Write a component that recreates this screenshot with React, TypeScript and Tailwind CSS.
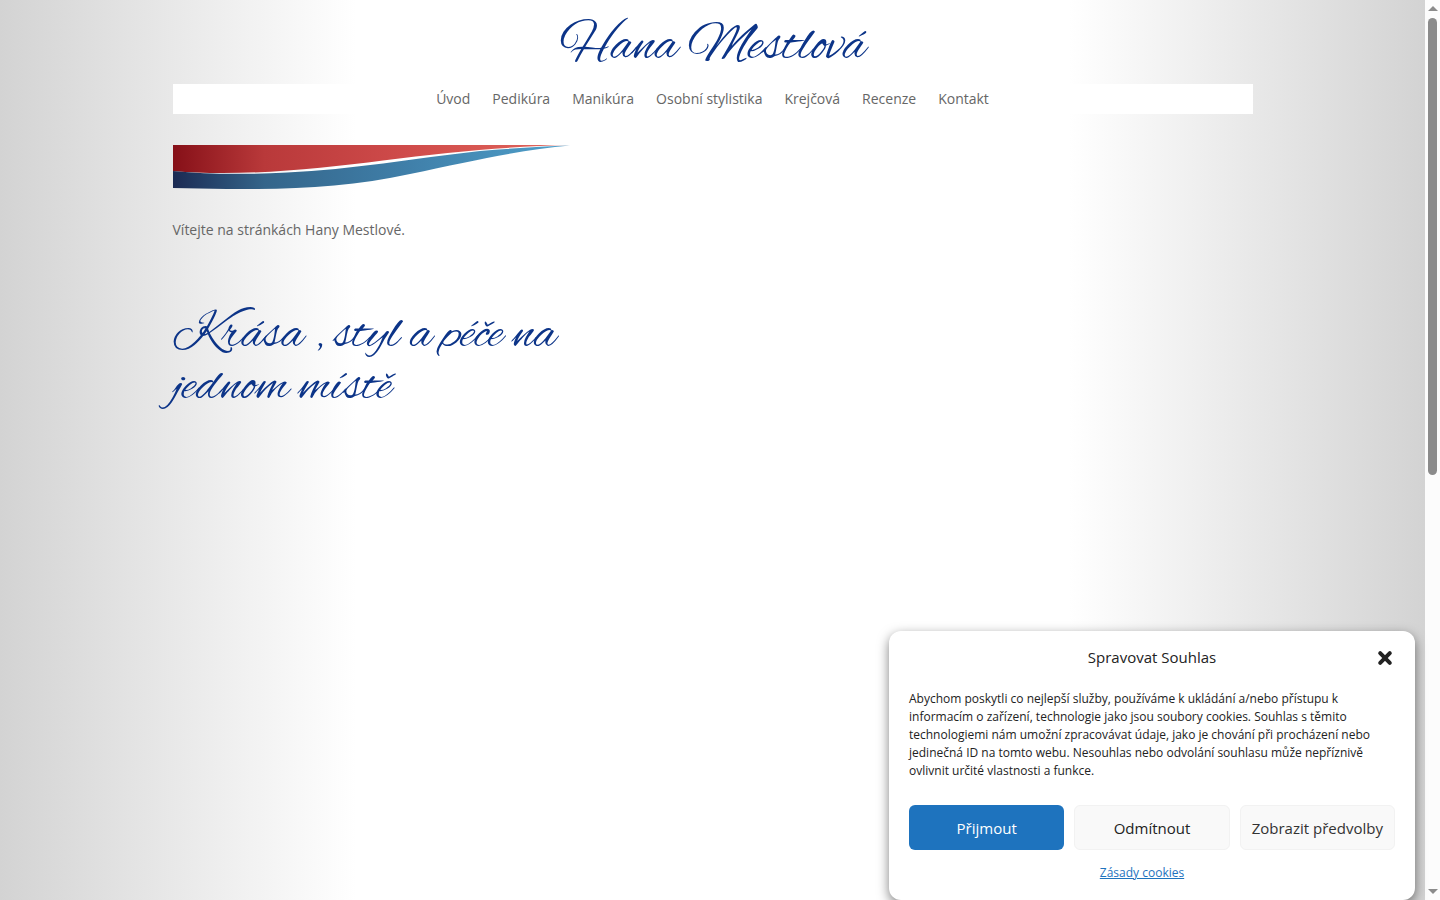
const menu = ['Úvod', 'Pedikúra', 'Manikúra', 'Osobní stylistika', 'Krejčová', 'Recenze', 'Kontakt']

function Header() {
  return (
    <header className="flex flex-col items-center">
      <a
        href="#"
        className="pt-4 h-[84px] font-['Alex_Brush',cursive] text-[54px] leading-[62px] text-[#0c3488]"
      >
        Hana Mestlová
      </a>
      <nav className="w-full h-[30px] bg-white flex items-center justify-center gap-[22px] text-sm text-[#666]">
        {menu.map((item) => (
          <a key={item} href="#">
            {item}
          </a>
        ))}
      </nav>
    </header>
  )
}

function Swoosh() {
  return (
    <svg viewBox="0 0 397 44" className="w-[397px] h-11" aria-hidden="true">
      <defs>
        <linearGradient id="red" x1="0" x2="1">
          <stop offset="0" stopColor="#861018" />
          <stop offset="0.23" stopColor="#b9393a" />
          <stop offset="0.6" stopColor="#d04c4b" />
          <stop offset="1" stopColor="#e2665c" />
        </linearGradient>
        <linearGradient id="blue" x1="0" x2="1">
          <stop offset="0" stopColor="#1b2a53" />
          <stop offset="0.23" stopColor="#34658a" />
          <stop offset="0.6" stopColor="#4080aa" />
          <stop offset="1" stopColor="#4fa0cb" />
        </linearGradient>
      </defs>
      <path d="M40 28C80 29 114 27 150 24C210 16 300 4 397 0.5C350 8 300 15 237 29C160 46 80 35 40 28Z" fill="#fff" />
      <path d="M0 0H397C340 1 276 7 210 15.500C145 24 65 32 0 26Z" fill="url(#red)" />
      <path d="M0 26C35 29.500 75 29.500 114 27.500C180 24.500 240 13.500 307 6C340 3.500 370 1 397 0.500C350 4.500 300 15.500 237 29C160 46 80 45 0 43Z" fill="url(#blue)" />
    </svg>
  )
}

function CookieDialog() {
  const plain = 'h-[45px] pt-[2px] rounded-md border border-[#f2f2f2] bg-[#f9f9f9] text-[15px] whitespace-nowrap'

  return (
    <section
      role="dialog"
      aria-labelledby="cookie-title"
      className="absolute bottom-0 right-[10px] w-[526px] rounded-xl bg-white px-5 pt-[15px] pb-[18px] text-[#222] shadow-[0_4px_12px_rgba(0,0,0,0.5)]"
    >
      <div className="grid grid-cols-[1fr_auto_1fr] items-center h-6">
        <h2 id="cookie-title" className="col-start-2 pb-[2px] text-[15px] leading-[22px]">
          Spravovat Souhlas
        </h2>
        <button type="button" aria-label="Zavřít" className="justify-self-end">
          <svg viewBox="0 0 20 20" className="size-5" fill="none" stroke="currentColor" strokeWidth="4" strokeLinecap="round">
            <path d="M5.200 5.200L14.800 14.800M14.800 5.200L5.200 14.800" />
          </svg>
        </button>
      </div>
      <p className="mt-5 text-xs leading-[18px]">
        Abychom poskytli co nejlepší služby, používáme k ukládání a/nebo přístupu k informacím o zařízení, technologie
        jako jsou soubory cookies. Souhlas s těmito technologiemi nám umožní zpracovávat údaje, jako je chování při
        procházení nebo jedinečná ID na tomto webu. Nesouhlas nebo odvolání souhlasu může nepříznivě ovlivnit určité
        vlastnosti a funkce.
      </p>
      <div className="mt-[25px] grid grid-cols-3 gap-[10px]">
        <button type="button" className="h-[45px] pt-[2px] rounded-md bg-[#1e73be] text-[15px] text-white">
          Přijmout
        </button>
        <button type="button" className={plain}>
          Odmítnout
        </button>
        <button type="button" className={`${plain} text-[#333]`}>
          Zobrazit předvolby
        </button>
      </div>
      <div className="mt-[13px] pr-5 text-center text-xs leading-[19px]">
        <a href="#" className="text-[#1e73be] underline">
          Zásady cookies
        </a>
      </div>
    </section>
  )
}

function ScrollBar() {
  return (
    <div className="w-[15px] shrink-0 bg-[#fcfcfc] flex flex-col items-center justify-between py-[6px]" aria-hidden="true">
      <svg viewBox="0 0 10 5" className="w-[10px] h-[5px] shrink-0" fill="#8b8b8b">
        <path d="M5 0L10 5H0Z" />
      </svg>
      <div className="mt-[7px] mb-auto w-[9px] h-[457px] rounded-full bg-[#8b8b8b]" />
      <svg viewBox="0 0 10 5" className="w-[10px] h-[5px] shrink-0" fill="#8b8b8b">
        <path d="M0 0H10L5 5Z" />
      </svg>
    </div>
  )
}

export default function App() {
  return (
    <div className="flex h-screen overflow-hidden font-['Open_Sans',sans-serif]">
      <div className="relative flex-1 bg-[linear-gradient(90deg,#d3d3d3_0%,#fff_25%,#fff_75%,#d3d3d3_100%)]">
        <div className="mx-auto max-w-[1080px]">
          <Header />
          <main className="pt-[31px]">
            <Swoosh />
            <p className="mt-[29px] text-sm leading-6 text-[#666]">Vítejte na stránkách Hany Mestlové.</p>
            <h1 className="mt-[68px] w-[47%] font-['Alex_Brush',cursive] text-[52px] leading-[52px] text-[#0c3488]">
              Krása , styl a péče na jednom místě
            </h1>
          </main>
        </div>
        <CookieDialog />
      </div>
      <ScrollBar />
    </div>
  )
}
